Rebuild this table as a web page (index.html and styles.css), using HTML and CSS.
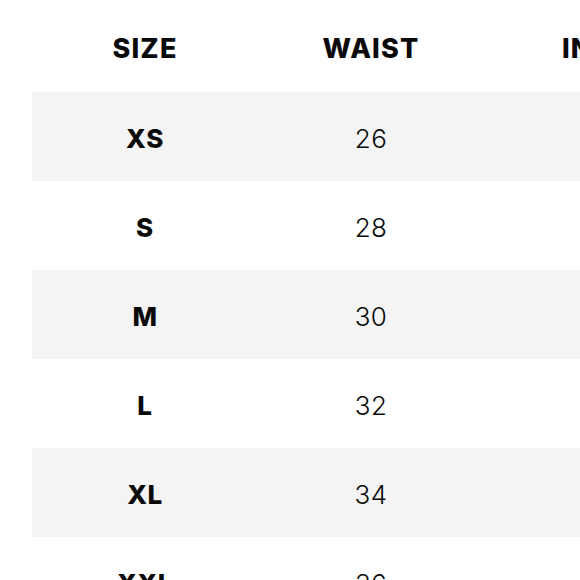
FILE: index.html
```html
<!DOCTYPE html>
<html lang="en">
<head>
<meta charset="utf-8">
<title>Size chart</title>
<link rel="stylesheet" href="styles.css">
</head>
<body>
<table class="size-chart">
  <colgroup>
    <col class="col-size">
    <col class="col-waist">
    <col class="col-inseam">
  </colgroup>
  <thead>
    <tr class="head-row">
      <th>SIZE</th>
      <th>WAIST</th>
      <th>INSEAM</th>
    </tr>
  </thead>
  <tbody>
    <tr class="row striped"><td class="label">XS</td><td class="num">26</td><td class="num">30</td></tr>
    <tr class="row"><td class="label">S</td><td class="num">28</td><td class="num">30</td></tr>
    <tr class="row striped"><td class="label">M</td><td class="num">30</td><td class="num">31</td></tr>
    <tr class="row"><td class="label">L</td><td class="num">32</td><td class="num">31</td></tr>
    <tr class="row striped"><td class="label">XL</td><td class="num">34</td><td class="num">32</td></tr>
    <tr class="row"><td class="label">XXL</td><td class="num">36</td><td class="num">32</td></tr>
  </tbody>
</table>
</body>
</html>
```
FILE: styles.css
```css
html, body {
  margin: 0;
  padding: 0;
  overflow: hidden;
  background: #ffffff;
}
body {
  font-family: "Inter", "Liberation Sans", sans-serif;
  color: #0a0a0a;
}
.size-chart {
  border-collapse: collapse;
  table-layout: fixed;
  width: 724px;
  margin-left: 32px;
}
.col-size { width: 226px; }
.col-waist { width: 226px; }
.col-inseam { width: 272px; }
.head-row th {
  height: 88px;
  padding: 4px 0 0;
  font-size: 27px;
  font-weight: 800;
  letter-spacing: 1.2px;
  text-align: center;
  vertical-align: middle;
}
.row td {
  height: 86px;
  padding: 3px 0 0;
  text-align: center;
  vertical-align: middle;
  font-size: 26px;
}
.row.striped { background: #f4f4f4; }
.label { font-weight: 800; letter-spacing: 0.6px; }
.num { font-weight: 300; letter-spacing: 0.4px; }
```
